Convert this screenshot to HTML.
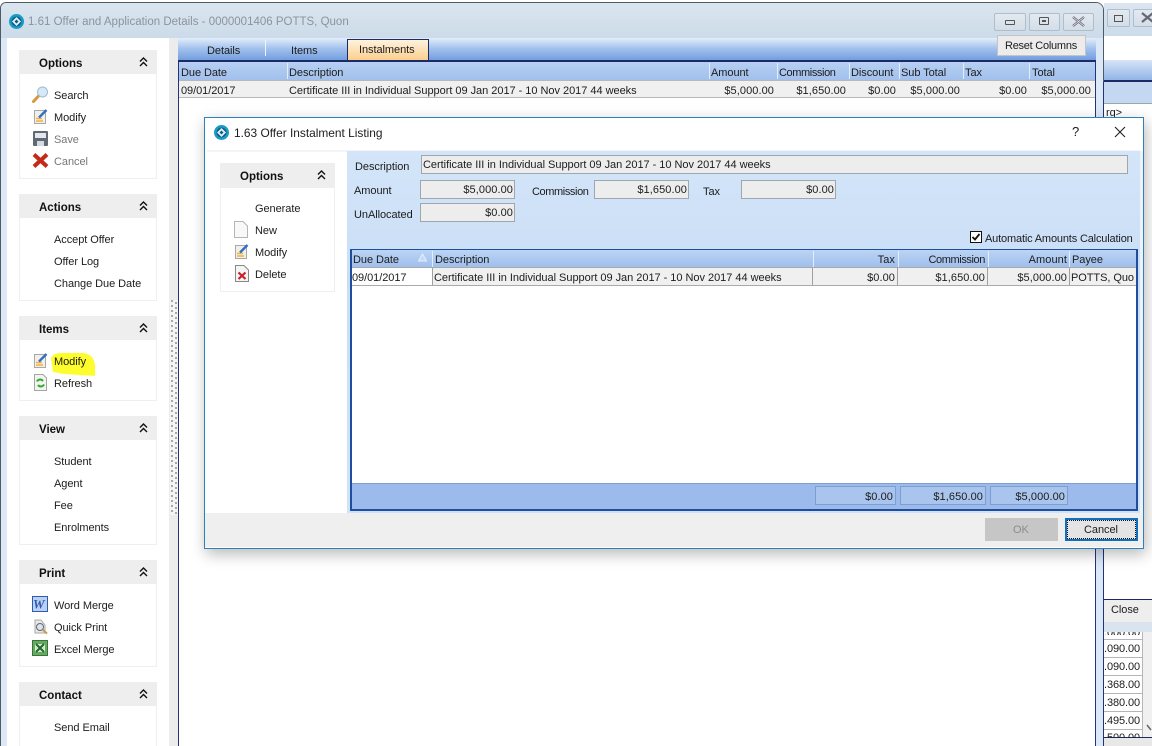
<!DOCTYPE html>
<html><head><meta charset="utf-8"><style>
html,body{margin:0;padding:0;background:#fff}
#r{position:relative;width:1152px;height:746px;overflow:hidden;background:#fff;font-family:"Liberation Sans",sans-serif;font-size:11px;letter-spacing:-.06px;color:#1c1c1c}
#r div,#r svg{position:absolute}
.t{white-space:nowrap;line-height:14px;height:14px;margin-top:1px}
.rt{white-space:nowrap;line-height:14px;height:14px;text-align:right;margin-top:1px;letter-spacing:.08px}
.g{color:#777}
.b{font-weight:bold;color:#111;font-size:11.5px;letter-spacing:0}
.c{letter-spacing:-.4px}
.ph{background:#eeeeee;left:19px;width:138px;height:24px}
.pb{background:#fff;left:19px;width:136px;border:1px solid #efefef;border-top:0}
.sep{width:1px;background:#e4eefb}
.inp{background:#ededed;border:1px solid #a0a6ad;box-sizing:border-box}
.foot{background:#a9c5ee;border:1px solid #7d9fd0;box-sizing:border-box;height:19px}
.cell{background:#a0a0a0;width:1px}
.wb{border:1px solid #b0bdca;border-radius:2px;box-sizing:border-box;background:linear-gradient(#e2e9f0,#d4dee8);height:18px}
.ln{left:1104px;width:38px;height:1px;background:#b5b5b5}
.dt{width:2px;height:215px;top:300px;background:repeating-linear-gradient(#a8a8a8 0 2px,transparent 2px 5px)}
.n{letter-spacing:-.1px}
</style></head><body><div id="r">

<!-- back window -->
<div style="left:1104px;top:3px;width:48px;height:33px;background:linear-gradient(#dbe6f1,#ccdbea)"></div>
<div style="left:1104px;top:36px;width:48px;height:24px;background:#fff"></div>
<div style="left:1104px;top:60px;width:48px;height:21px;background:linear-gradient(#d6e5f7,#8fb2e6)"></div>
<div style="left:1104px;top:80px;width:48px;height:2px;background:#1c2a66"></div>
<div style="left:1104px;top:82px;width:48px;height:21px;background:#c4d8f2"></div>
<div style="left:1104px;top:103px;width:48px;height:1px;background:#9aa8b5"></div>
<div style="left:1104px;top:104px;width:48px;height:495px;background:#fff"></div>
<div class="t" style="left:1106px;top:105px">rg&gt;</div>
<div class="wb" style="left:1107px;top:9px;width:23px"></div>
<div style="left:1114px;top:15px;width:9px;height:7px;border:1px solid #555;box-sizing:border-box"></div>
<div class="wb" style="left:1133px;top:9px;width:26px"></div>
<svg style="left:1140px;top:11px" width="12" height="13"><path d="M2 2L13 11M13 2L2 11" stroke="#667" stroke-width="2.200" fill="none"/></svg>
<div style="left:1104px;top:599px;width:48px;height:1px;background:#1c2a66"></div>
<div style="left:1104px;top:600px;width:48px;height:22px;background:#eeeeee"></div>
<div class="t" style="left:1111px;top:602px">Close</div>
<div style="left:1104px;top:622px;width:48px;height:10px;background:#d9e4ef"></div>
<div style="left:1142px;top:632px;width:10px;height:114px;background:#f0f0f0"></div>
<div style="left:1104px;top:632px;width:38px;height:105px;background:#fff;overflow:hidden"></div>
<div class="ln" style="top:639px"></div>
<div class="ln" style="top:657px"></div>
<div class="ln" style="top:675px"></div>
<div class="ln" style="top:693px"></div>
<div class="ln" style="top:711px"></div>
<div class="ln" style="top:729px"></div>
<div style="left:1142px;top:632px;width:1px;height:105px;background:#b5b5b5"></div>
<svg style="left:1146px;top:724px" width="6" height="8"><path d="M1 1L5 6" stroke="#666" stroke-width="1.500"/></svg>
<div style="left:1104px;top:737px;width:48px;height:9px;background:#e8e8e8;border-top:1px solid #1c2a66;box-sizing:border-box"></div>

<!-- main window -->
<div style="left:0;top:2px;width:1104px;height:744px;background:#dce8f6;border:1px solid #4d5a68;border-bottom:0;border-radius:6px 8px 0 0;box-sizing:border-box"></div>
<div style="left:1px;top:3px;width:1102px;height:35px;border-radius:5px 7px 0 0;background:linear-gradient(#dbe5ee,#ccdbe9)"></div>
<svg style="left:8px;top:13px" width="17" height="17" viewBox="0 0 17 17"><circle cx="8.500" cy="8.500" r="7.500" fill="#1a9bc4"/><circle cx="8.500" cy="8.500" r="5" fill="#0d5c86"/><path d="M8.500 4L13 8.500L8.500 13L4 8.500Z" fill="#dff3fa"/><path d="M8.500 6.500L10.500 8.500L8.500 10.500L6.500 8.500Z" fill="#0d5c86"/></svg>
<div class="t" style="left:28px;top:15px;margin-top:0;color:#8a949d;font-size:11.5px;letter-spacing:0">1.61 Offer and Application Details - 0000001406 POTTS, Quon</div>
<div class="wb" style="left:994px;top:13px;width:32px"></div>
<div style="left:1005px;top:20px;width:10px;height:5px;border:1px solid #555;box-sizing:border-box;border-radius:1px"></div>
<div class="wb" style="left:1029px;top:13px;width:31px"></div>
<div style="left:1039px;top:17px;width:10px;height:8px;border:1px solid #555;box-sizing:border-box;border-radius:1px"></div>
<div style="left:1042px;top:20px;width:4px;height:2px;background:#555"></div>
<div class="wb" style="left:1063px;top:13px;width:31px"></div>
<svg style="left:1071px;top:15px" width="15" height="13"><path d="M2 2L13 11M13 2L2 11" stroke="#667" stroke-width="2.400" fill="none"/><path d="M2 2L13 11M13 2L2 11" stroke="#eee" stroke-width=".8" fill="none"/></svg>

<!-- right-hand numbers, drawn above window edge -->
<div class="rt n" style="left:1100px;top:632px;width:40px;height:3px;overflow:hidden;line-height:3px;margin-top:0">.000.00</div>
<div class="rt n" style="left:1098px;top:641px;width:42px">.090.00</div>
<div class="rt n" style="left:1098px;top:659px;width:42px">.090.00</div>
<div class="rt n" style="left:1098px;top:677px;width:42px">.368.00</div>
<div class="rt n" style="left:1098px;top:695px;width:42px">.380.00</div>
<div class="rt n" style="left:1098px;top:713px;width:42px">.495.00</div>
<div class="rt n" style="left:1098px;top:731px;width:42px;height:6px;overflow:hidden;line-height:12px">.500.00</div>

<!-- sidebar -->
<div style="left:7px;top:38px;width:162px;height:708px;background:#fff"></div>
<div style="left:169px;top:38px;width:9px;height:708px;background:#ececec"></div>
<div style="left:170px;top:300px;width:8px;height:215px;background:#f4f4f4"></div>
<div class="dt" style="left:171px"></div>
<div class="dt" style="left:175px;margin-top:2px"></div>

<div class="ph" style="top:50px"></div><div class="pb" style="top:74px;height:104px"></div>
<div class="t b" style="left:39px;top:56px">Options</div>
<div class="ph" style="top:194px"></div><div class="pb" style="top:218px;height:82px"></div>
<div class="t b" style="left:39px;top:200px">Actions</div>
<div class="ph" style="top:316px"></div><div class="pb" style="top:340px;height:60px"></div>
<div class="t b" style="left:39px;top:322px">Items</div>
<div class="ph" style="top:416px"></div><div class="pb" style="top:440px;height:104px"></div>
<div class="t b" style="left:39px;top:422px">View</div>
<div class="ph" style="top:560px"></div><div class="pb" style="top:584px;height:82px"></div>
<div class="t b" style="left:39px;top:566px">Print</div>
<div class="ph" style="top:682px"></div><div class="pb" style="top:706px;height:40px"></div>
<div class="t b" style="left:39px;top:688px">Contact</div>

<svg style="left:139px;top:57px" width="9" height="10"><path d="M1 4.500L4.500 1L8 4.500M1 9L4.500 5.500L8 9" stroke="#111" stroke-width="1.400" fill="none"/></svg>
<svg style="left:139px;top:201px" width="9" height="10"><path d="M1 4.500L4.500 1L8 4.500M1 9L4.500 5.500L8 9" stroke="#111" stroke-width="1.400" fill="none"/></svg>
<svg style="left:139px;top:323px" width="9" height="10"><path d="M1 4.500L4.500 1L8 4.500M1 9L4.500 5.500L8 9" stroke="#111" stroke-width="1.400" fill="none"/></svg>
<svg style="left:139px;top:423px" width="9" height="10"><path d="M1 4.500L4.500 1L8 4.500M1 9L4.500 5.500L8 9" stroke="#111" stroke-width="1.400" fill="none"/></svg>
<svg style="left:139px;top:567px" width="9" height="10"><path d="M1 4.500L4.500 1L8 4.500M1 9L4.500 5.500L8 9" stroke="#111" stroke-width="1.400" fill="none"/></svg>
<svg style="left:139px;top:689px" width="9" height="10"><path d="M1 4.500L4.500 1L8 4.500M1 9L4.500 5.500L8 9" stroke="#111" stroke-width="1.400" fill="none"/></svg>

<div class="t" style="left:54px;top:88px">Search</div>
<div class="t" style="left:54px;top:110px">Modify</div>
<div class="t g" style="left:54px;top:132px">Save</div>
<div class="t g" style="left:54px;top:154px">Cancel</div>
<div class="t" style="left:54px;top:232px">Accept Offer</div>
<div class="t" style="left:54px;top:254px">Offer Log</div>
<div class="t" style="left:54px;top:276px">Change Due Date</div>
<svg style="left:50px;top:351px" width="46" height="26"><path d="M1 7Q3 2 12 2L34 2Q44 4 45 14L45 25L14 23L3 21Z" fill="#fdfd2e"/></svg>
<div class="t" style="left:54px;top:354px">Modify</div>
<div class="t" style="left:54px;top:376px">Refresh</div>
<div class="t" style="left:54px;top:454px">Student</div>
<div class="t" style="left:54px;top:476px">Agent</div>
<div class="t" style="left:54px;top:498px">Fee</div>
<div class="t" style="left:54px;top:520px">Enrolments</div>
<div class="t" style="left:54px;top:598px">Word Merge</div>
<div class="t" style="left:54px;top:620px">Quick Print</div>
<div class="t" style="left:54px;top:642px">Excel Merge</div>
<div class="t" style="left:54px;top:720px">Send Email</div>

<!-- sidebar icons -->
<svg style="left:32px;top:86px" width="17" height="17"><path d="M1.500 15.500L7 9.500" stroke="#d69a3c" stroke-width="3" stroke-linecap="round"/><circle cx="10.500" cy="6" r="5" fill="#d6e9f8" stroke="#9cbdd4"/></svg>
<svg style="left:33px;top:108px" width="16" height="17"><rect x="1.500" y="2.500" width="11" height="13" fill="#f3efe6" stroke="#a8a8a8"/><path d="M3 10.500H9M3 13H10" stroke="#f0b23e" stroke-width="1.600"/><path d="M6 9.500L13.500 2" stroke="#2e6fc9" stroke-width="2.400"/></svg>
<svg style="left:33px;top:131px" width="15" height="15"><rect x="0" y="0" width="15" height="15" rx="1" fill="#5f6a75"/><rect x="2" y="2" width="11" height="5" fill="#e4e8ec"/><rect x="4" y="10" width="7" height="5" fill="#d7dbdf"/></svg>
<svg style="left:32px;top:153px" width="17" height="15"><path d="M2 1.500L15 13.500M15 1.500L2 13.500" stroke="#c4291a" stroke-width="4"/></svg>
<svg style="left:33px;top:352px" width="16" height="17"><rect x="1.500" y="2.500" width="11" height="13" fill="#f3efe6" stroke="#a8a8a8"/><path d="M3 10.500H9M3 13H10" stroke="#f0b23e" stroke-width="1.600"/><path d="M6 9.500L13.500 2" stroke="#2e6fc9" stroke-width="2.400"/></svg>
<svg style="left:34px;top:374px" width="13" height="17"><path d="M.5 .5H9L12.500 4V16.500H.5Z" fill="#f2f5ef" stroke="#a5a5a5"/><path d="M3 7.500A3.500 3.500 0 0 1 9 7M10 10.500A3.500 3.500 0 0 1 4 11" stroke="#35a52f" stroke-width="2" fill="none"/></svg>
<svg style="left:32px;top:596px" width="16" height="16"><rect x=".5" y=".5" width="15" height="15" fill="#bcd0f0" stroke="#2a5bb5"/><text x="1" y="12.500" font-family="Liberation Serif,serif" font-style="italic" font-weight="bold" font-size="13" fill="#2a5bb5">W</text></svg>
<svg style="left:32px;top:618px" width="17" height="17"><path d="M3 15V2H9L13 7V15Z" fill="#e8e8e8" stroke="#aaa"/><circle cx="8" cy="9" r="3.500" fill="#d9e6ef" stroke="#666"/><path d="M10.500 11.500L15 15.500" stroke="#c99a4a" stroke-width="2"/></svg>
<svg style="left:32px;top:640px" width="16" height="16"><rect x=".5" y=".5" width="15" height="15" fill="#6aa765" stroke="#2f7a35"/><rect x="3" y="4" width="10" height="8" fill="#d6eacf"/><path d="M4 4L12 12M12 4L4 12" stroke="#1d6a2c" stroke-width="2"/></svg>

<!-- content -->
<div style="left:178px;top:38px;width:918px;height:708px;background:#fff"></div>
<div style="left:178px;top:38px;width:918px;height:23px;background:linear-gradient(#e3eefb,#a3c2ed 45%,#6f9bdd)"></div>
<div style="left:178px;top:60px;width:918px;height:2px;background:#1c2a66"></div>
<div style="left:1096px;top:38px;width:7px;height:708px;background:#dce8f6"></div>
<div style="left:1095px;top:61px;width:1px;height:685px;background:#22337a"></div>
<div style="left:1103px;top:82px;width:1px;height:664px;background:#22337a"></div>
<div style="left:178px;top:61px;width:1px;height:685px;background:#22337a"></div>
<div style="left:265px;top:40px;width:1px;height:16px;background:#eef4fc"></div>
<div class="t" style="left:207px;top:43px">Details</div>
<div class="t" style="left:291px;top:43px">Items</div>
<div style="left:347px;top:39px;width:82px;height:21px;box-sizing:border-box;border:1px solid #1c2a66;border-bottom:0;background:linear-gradient(#fff2de,#fbcf8d)"></div>
<div class="t" style="left:359px;top:42px">Instalments</div>
<div style="left:997px;top:35px;width:89px;height:21px;background:#ececec;border:1px solid #c4c4c4;box-sizing:border-box"></div>
<div class="t" style="left:1005px;top:38px;letter-spacing:-.25px">Reset Columns</div>

<div style="left:179px;top:62px;width:916px;height:18px;background:linear-gradient(#b7d0f3,#a1c0ec)"></div>
<div style="left:179px;top:80px;width:916px;height:18px;background:#f0f0f0;border-top:1px solid #b8b8b8;border-bottom:1px solid #b8b8b8;box-sizing:border-box"></div>
<div class="sep" style="left:287px;top:63px;height:16px"></div>
<div class="sep" style="left:709px;top:63px;height:16px"></div>
<div class="sep" style="left:777px;top:63px;height:16px"></div>
<div class="sep" style="left:849px;top:63px;height:16px"></div>
<div class="sep" style="left:899px;top:63px;height:16px"></div>
<div class="sep" style="left:963px;top:63px;height:16px"></div>
<div class="sep" style="left:1029px;top:63px;height:16px"></div>
<div class="t" style="left:181px;top:65px">Due Date</div>
<div class="t" style="left:289px;top:65px">Description</div>
<div class="t" style="left:711px;top:65px">Amount</div>
<div class="t c" style="left:779px;top:65px">Commission</div>
<div class="t" style="left:851px;top:65px">Discount</div>
<div class="t" style="left:901px;top:65px">Sub Total</div>
<div class="t" style="left:965px;top:65px">Tax</div>
<div class="t" style="left:1032px;top:65px">Total</div>
<div class="t" style="left:181px;top:83px">09/01/2017</div>
<div class="t" style="left:289px;top:83px;letter-spacing:-.03px">Certificate III in Individual Support 09 Jan 2017 - 10 Nov 2017 44 weeks</div>
<div class="rt" style="left:699px;top:83px;width:75px">$5,000.00</div>
<div class="rt" style="left:769px;top:83px;width:77px">$1,650.00</div>
<div class="rt" style="left:849px;top:83px;width:47px">$0.00</div>
<div class="rt" style="left:889px;top:83px;width:71px">$5,000.00</div>
<div class="rt" style="left:969px;top:83px;width:58px">$0.00</div>
<div class="rt" style="left:1019px;top:83px;width:72px">$5,000.00</div>

<!-- dialog -->
<div style="left:204px;top:117px;width:940px;height:432px;background:#fff;border:1px solid #2f7fbd;box-sizing:border-box;box-shadow:2px 5px 14px rgba(0,0,0,.28)"></div>
<svg style="left:213px;top:124px" width="17" height="17" viewBox="0 0 17 17"><circle cx="8.500" cy="8.500" r="7.500" fill="#1a9bc4"/><circle cx="8.500" cy="8.500" r="5" fill="#0d5c86"/><path d="M8.500 4L13 8.500L8.500 13L4 8.500Z" fill="#dff3fa"/><path d="M8.500 6.500L10.500 8.500L8.500 10.500L6.500 8.500Z" fill="#0d5c86"/></svg>
<div class="t" style="left:234px;top:126px;margin-top:0;font-size:11.9px;letter-spacing:0">1.63 Offer Instalment Listing</div>
<div class="t" style="left:1072px;top:125px;margin-top:0;font-size:13px">?</div>
<svg style="left:1114px;top:126px" width="12" height="12"><path d="M1 1L11 11M11 1L1 11" stroke="#222" stroke-width="1.100"/></svg>
<div style="left:207px;top:150px;width:933px;height:2px;background:#f2f5f8"></div>
<div style="left:347px;top:151px;width:793px;height:362px;background:linear-gradient(#d4e5f9,#c9def6 35%,#cfe2f8)"></div>
<div style="left:205px;top:513px;width:938px;height:34px;background:#efefef"></div>
<div style="left:1140px;top:151px;width:3px;height:362px;background:#eef2f6"></div>

<div class="ph" style="left:220px;top:163px;width:115px;height:25px"></div>
<div class="pb" style="left:220px;top:188px;width:113px;height:103px"></div>
<div class="t b" style="left:240px;top:169px">Options</div>
<svg style="left:317px;top:170px" width="9" height="10"><path d="M1 4.500L4.500 1L8 4.500M1 9L4.500 5.500L8 9" stroke="#111" stroke-width="1.400" fill="none"/></svg>
<div class="t" style="left:255px;top:201px">Generate</div>
<div class="t" style="left:255px;top:223px">New</div>
<div class="t" style="left:255px;top:245px">Modify</div>
<div class="t" style="left:255px;top:267px">Delete</div>
<svg style="left:234px;top:221px" width="14" height="17"><path d="M.5 .5H9L13.500 5V16.500H.5Z" fill="#f8f8f8" stroke="#b5b5b5"/></svg>
<svg style="left:234px;top:243px" width="16" height="17"><rect x="1.500" y="2.500" width="11" height="13" fill="#f3efe6" stroke="#a8a8a8"/><path d="M3 10.500H9M3 13H10" stroke="#f0b23e" stroke-width="1.600"/><path d="M6 9.500L13.500 2" stroke="#2e6fc9" stroke-width="2.400"/></svg>
<svg style="left:235px;top:265px" width="14" height="17"><path d="M.5 .5H9L13.500 5V16.500H.5Z" fill="#f4f4f4" stroke="#888"/><path d="M3.500 7.500L10.500 14M10.500 7.500L3.500 14" stroke="#c8202a" stroke-width="2.200"/></svg>

<div class="t" style="left:355px;top:159px">Description</div>
<div class="inp" style="left:421px;top:155px;width:707px;height:19px"></div>
<div class="t" style="left:423px;top:157px;letter-spacing:-.03px">Certificate III in Individual Support 09 Jan 2017 - 10 Nov 2017 44 weeks</div>
<div class="t" style="left:354px;top:183px">Amount</div>
<div class="inp" style="left:420px;top:180px;width:95px;height:19px"></div>
<div class="rt" style="left:420px;top:182px;width:93px">$5,000.00</div>
<div class="t c" style="left:532px;top:184px">Commission</div>
<div class="inp" style="left:594px;top:180px;width:95px;height:19px"></div>
<div class="rt" style="left:594px;top:182px;width:93px">$1,650.00</div>
<div class="t" style="left:703px;top:184px">Tax</div>
<div class="inp" style="left:741px;top:180px;width:95px;height:19px"></div>
<div class="rt" style="left:741px;top:182px;width:93px">$0.00</div>
<div class="t" style="left:354px;top:207px">UnAllocated</div>
<div class="inp" style="left:420px;top:203px;width:95px;height:19px"></div>
<div class="rt" style="left:420px;top:205px;width:93px">$0.00</div>

<svg style="left:970px;top:231px" width="12" height="13"><rect x=".5" y=".5" width="11" height="11" fill="#fff" stroke="#111"/><path d="M2.500 6L5 8.500L9.500 3" stroke="#111" stroke-width="1.800" fill="none"/></svg>
<div class="t" style="left:985px;top:231px;letter-spacing:-.16px">Automatic Amounts Calculation</div>

<!-- dialog grid -->
<div style="left:350px;top:249px;width:788px;height:262px;background:#fff;border:2px solid #1f4f9c;border-width:1px 2px 2px 2px;box-sizing:border-box"></div>
<div style="left:352px;top:250px;width:784px;height:17px;background:linear-gradient(#bcd4f5,#9fbfec)"></div>
<div style="left:352px;top:267px;width:784px;height:19px;background:#f0f0f0;border-top:1px solid #aaa;border-bottom:1px solid #aaa;box-sizing:border-box"></div>
<div style="left:352px;top:268px;width:80px;height:17px;background:#fff"></div>
<div class="sep" style="left:432px;top:251px;height:16px"></div>
<div class="sep" style="left:813px;top:251px;height:16px"></div>
<div class="sep" style="left:898px;top:251px;height:16px"></div>
<div class="sep" style="left:988px;top:251px;height:16px"></div>
<div class="sep" style="left:1069px;top:251px;height:16px"></div>
<div class="cell" style="left:432px;top:268px;height:17px"></div>
<div class="cell" style="left:812px;top:268px;height:17px"></div>
<div class="cell" style="left:897px;top:268px;height:17px"></div>
<div class="cell" style="left:987px;top:268px;height:17px"></div>
<div class="cell" style="left:1069px;top:268px;height:17px"></div>
<div class="t" style="left:353px;top:252px">Due Date</div>
<svg style="left:418px;top:253px" width="9" height="9"><path d="M4.500 1L8.500 8H.5Z" fill="#c4d9f6" stroke="#e4eefb"/></svg>
<div class="t" style="left:435px;top:252px">Description</div>
<div class="rt" style="left:820px;top:252px;width:75px">Tax</div>
<div class="rt c" style="left:900px;top:252px;width:85px">Commission</div>
<div class="rt" style="left:990px;top:252px;width:77px">Amount</div>
<div class="t" style="left:1072px;top:252px">Payee</div>
<div class="t" style="left:352px;top:270px">09/01/2017</div>
<div class="t" style="left:434px;top:270px;letter-spacing:-.03px">Certificate III in Individual Support 09 Jan 2017 - 10 Nov 2017 44 weeks</div>
<div class="rt" style="left:820px;top:270px;width:75px">$0.00</div>
<div class="rt" style="left:900px;top:270px;width:85px">$1,650.00</div>
<div class="rt" style="left:990px;top:270px;width:77px">$5,000.00</div>
<div class="t" style="left:1071px;top:270px;width:63px;overflow:hidden">POTTS, Quon</div>

<div style="left:352px;top:483px;width:784px;height:26px;background:#9cbaec;border-top:1px solid #7d9fd0;box-sizing:border-box"></div>
<div class="foot" style="left:815px;top:486px;width:81px"></div>
<div class="foot" style="left:900px;top:486px;width:86px"></div>
<div class="foot" style="left:990px;top:486px;width:78px"></div>
<div class="rt" style="left:815px;top:489px;width:78px">$0.00</div>
<div class="rt" style="left:900px;top:489px;width:83px">$1,650.00</div>
<div class="rt" style="left:990px;top:489px;width:75px">$5,000.00</div>

<div style="left:985px;top:518px;width:73px;height:23px;background:#c6c6c6"></div>
<div class="t" style="left:1013px;top:522px;color:#8c8c8c">OK</div>
<div style="left:1065px;top:518px;width:73px;height:23px;background:#e4e4e4;border:2px solid #0f6fc0;box-sizing:border-box"></div>
<div style="left:1067px;top:520px;width:69px;height:19px;border:1px dotted #111;box-sizing:border-box"></div>
<div class="t" style="left:1084px;top:522px">Cancel</div>

</div></body></html>
